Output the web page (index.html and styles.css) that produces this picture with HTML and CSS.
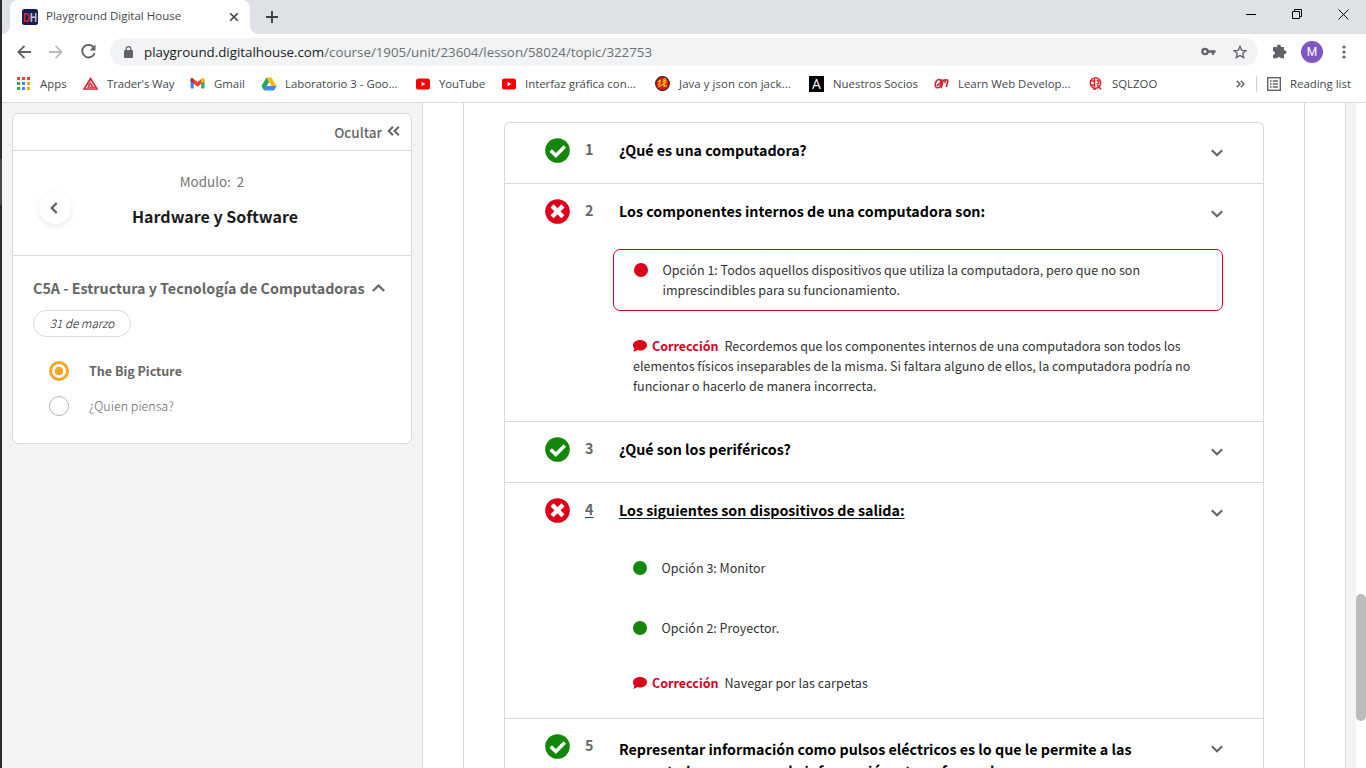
FILE: index.html
```html
<!DOCTYPE html>
<html lang="es">
<head>
<meta charset="utf-8">
<title>Playground Digital House</title>
<link rel="stylesheet" href="styles.css">
</head>
<body>
<svg class="defs" aria-hidden="true">
  <symbol id="ok" viewBox="0 0 25 25"><circle cx="12.5" cy="12.5" r="12.3" fill="#138808"/><path d="M5.700 12.400l5.200 5.200 8.900-9" fill="none" stroke="#fff" stroke-width="3.500"/></symbol>
  <symbol id="bad" viewBox="0 0 25 25"><circle cx="12.5" cy="12.5" r="12.3" fill="#dc001b"/><path d="M8.600 8.400l7.800 7.800M16.400 8.400l-7.800 7.800" fill="none" stroke="#fff" stroke-width="4.400" stroke-linecap="square"/></symbol>
  <symbol id="chev" viewBox="0 0 12 8"><path d="M.8 1.2L6 6.3l5.2-5.1" fill="none" stroke="#666" stroke-width="2.1"/></symbol>
  <symbol id="talk" viewBox="0 0 14 12"><path d="M7 0c3.9 0 7 2.3 7 5.2s-3.1 5.3-7 5.3c-1 0-2-.2-2.900-.5C3 11 1.600 11.600.2 11.600c.8-.8 1.200-1.900 1.200-2.900C.5 7.700 0 6.500 0 5.200 0 2.300 3.100 0 7 0z" fill="#dc001b"/></symbol>
  <symbol id="yt" viewBox="0 0 16 16"><rect x="1" y="2.500" width="14" height="11" rx="2.600" fill="#f00"/><path d="M6.600 5.800v4.400L10.300 8z" fill="#fff"/></symbol>
</svg>
<div class="window">
  <header class="tabs">
    <div class="tab">
      <svg width="16" height="16" viewBox="0 0 16 16"><rect width="16" height="16" rx="2.500" fill="#14204f"/><text x="1" y="13" class="logo red" textLength="7" lengthAdjust="spacingAndGlyphs">D</text><text x="8" y="13" class="logo pale" textLength="7" lengthAdjust="spacingAndGlyphs">H</text></svg>
      <span class="tab-title">Playground Digital House</span>
      <svg width="10" height="10" viewBox="0 0 10 10"><path d="M1.200 1.200l7.600 7.600M8.800 1.200L1.200 8.800" stroke="#3c4043" stroke-width="1.600"/></svg>
    </div>
    <svg class="plus" width="12" height="12" viewBox="0 0 12 12"><path d="M6 0v12M0 6h12" stroke="#3c4043" stroke-width="1.900"/></svg>
    <div class="wincontrols">
      <svg width="10" height="10"><path d="M0 5.500h10" stroke="#000"/></svg>
      <svg width="10" height="10" fill="none" stroke="#000"><path d="M.5 2.500h7v7h-7zM2.500 2.500v-2h7v7h-2"/></svg>
      <svg width="11" height="11"><path d="M.5.5l10 10M10.500.5l-10 10" stroke="#000"/></svg>
    </div>
  </header>
  <nav class="toolbar">
    <svg width="14" height="14" viewBox="0 0 14 14" fill="none" stroke="#5f6368" stroke-width="1.900"><path d="M14 7H1.500M7.500.8L1.300 7l6.200 6.200"/></svg>
    <svg class="fwd" width="14" height="14" viewBox="0 0 14 14" fill="none" stroke="#babcbe" stroke-width="1.900"><path d="M0 7h12.500M6.500.8L12.700 7l-6.200 6.200"/></svg>
    <svg class="reload" width="15" height="15" viewBox="0 0 15 15"><path d="M12.400 3.100A6.300 6.300 0 1 0 13.600 9" fill="none" stroke="#5f6368" stroke-width="1.900"/><path d="M14.500.5v6h-6z" fill="#5f6368"/></svg>
    <div class="omnibox">
      <svg width="9" height="12" viewBox="0 0 9 12"><rect y="4" width="9" height="8" rx="1" fill="#5f6368"/><path d="M2.200 4.500V3a2.300 2.300 0 0 1 4.600 0v1.500" fill="none" stroke="#5f6368" stroke-width="1.200"/></svg>
      <span class="url"><b>playground.digitalhouse.com</b>/course/1905/unit/23604/lesson/58024/topic/322753</span>
      <svg width="15" height="9" viewBox="0 0 15 9"><circle cx="4" cy="4.500" r="2.700" fill="none" stroke="#5f6368" stroke-width="2.300"/><path d="M7 4.500h7.500M12 4.500v3.200" stroke="#5f6368" stroke-width="2.400"/></svg>
      <svg class="star" width="14" height="14" viewBox="0 0 14 14"><path d="M7 1.300l1.700 4 4.200.3-3.200 2.800 1 4.200L7 10.400l-3.700 2.200 1-4.200L1.100 5.600l4.200-.3z" fill="none" stroke="#5f6368" stroke-width="1.300"/></svg>
    </div>
    <svg class="puzzle" width="15" height="15" viewBox="0 0 15 15"><path d="M2 3h3.200a1.900 1.900 0 1 1 3.600 0H12v3.400a1.900 1.900 0 1 1 0 3.600v4.200H8.800a1.900 1.900 0 0 0-3.600 0H1V11a1.900 1.900 0 0 0 0-3.800V4a1 1 0 0 1 1-1z" fill="#5f6368"/></svg>
    <span class="avatar">M</span>
    <svg class="dots" width="4" height="14" viewBox="0 0 4 14" fill="#5f6368"><circle cx="2" cy="2" r="1.600"/><circle cx="2" cy="7" r="1.600"/><circle cx="2" cy="12" r="1.600"/></svg>
  </nav>
  <nav class="bookmarks">
    <span class="bm"><svg width="15" height="15" viewBox="0 0 15 15"><path d="M1 1h3v3H1zM6 1h3v3H6zM11 1h3v3h-3z" fill="#ea4335"/><path d="M1 6h3v3H1zM1 11h3v3H1z" fill="#34a853"/><path d="M6 6h3v3H6zM6 11h3v3H6z" fill="#4285f4"/><path d="M11 6h3v3h-3zM11 11h3v3h-3z" fill="#fbab05"/></svg>Apps</span>
    <span class="bm"><svg width="15" height="15" viewBox="0 0 15 15" fill="none" stroke="#d6293a"><path d="M7.500 2.500L14 13H1z" stroke-width="1.700"/><path d="M7.500 7.300L10 11.200H5z" stroke-width="1.300"/><path d="M5 9l3-5M8 11.500h5" stroke-width=".7"/></svg>Trader's Way</span>
    <span class="bm"><svg width="15" height="15" viewBox="0 0 15 15"><path d="M.5 4v7.500a1 1 0 0 0 1 1h2.300V6z" fill="#4285f4"/><path d="M11.200 6v6.500h2.300a1 1 0 0 0 1-1V4z" fill="#34a853"/><path d="M11.200 3.200v4.500l3.300-2.600V3.700c0-1.500-1.600-2-2.500-1.200z" fill="#fbbc04"/><path d="M3.800 3.200v4.500L.5 5.100V3.700c0-1.500 1.600-2 2.500-1.200z" fill="#c5221f"/><path d="M3.700 3.100l3.800 3 3.800-3v4.600l-3.800 3-3.800-3z" fill="#ea4335"/></svg>Gmail</span>
    <span class="bm"><svg width="16" height="16" viewBox="0 0 16 16"><path d="M5.500 1.500h5l5 8.500h-5z" fill="#fbbc04"/><path d="M5.500 1.500L8 6l-5 8.500L.5 10z" fill="#1fa463"/><path d="M5.500 10h10L13 14.500H3z" fill="#4285f4"/></svg>Laboratorio 3 - Goo...</span>
    <span class="bm"><svg width="16" height="16"><use href="#yt"/></svg>YouTube</span>
    <span class="bm"><svg width="16" height="16"><use href="#yt"/></svg>Interfaz gráfica con...</span>
    <span class="bm"><svg width="15" height="15" viewBox="0 0 15 15"><circle cx="7.500" cy="7.500" r="6.900" fill="#e3170d" stroke="#40211c" stroke-width="1.100"/><path d="M3 6.200l3-2.300M5 4v3.500l-2 1.500M3.500 11l3-2M8 3.500l3-.8M7.500 5.500l4-1M9.200 4v6.500l3-1M7 9l4.500-3" fill="none" stroke="#ffd21c" stroke-width="1.200"/></svg>Java y json con jack...</span>
    <span class="bm"><svg width="15" height="16" viewBox="0 0 15 16"><rect width="15" height="16"/><text x="7.500" y="13" text-anchor="middle" class="a-mark">A</text></svg>Nuestros Socios</span>
    <span class="bm"><svg width="15" height="15" viewBox="0 0 15 15" fill="none" stroke="#c8242b" stroke-width="1.600"><ellipse cx="4.300" cy="7.700" rx="2.900" ry="4.200" transform="rotate(20 4.300 7.700)"/><path d="M2.800 9.800C5 8.500 7 6 7.800 3.200M7 12.300l2.300-8M9.300 4.500c1.800-1.500 2.600-.5 1.500 2.500M10.800 5c2.500-2.500 3.500-1 2.700 1.500l-1.200 4.500"/></svg>Learn Web Develop...</span>
    <span class="bm"><svg width="15" height="15" viewBox="0 0 15 15" fill="none" stroke="#e0202c" stroke-width="1.500"><circle cx="7.500" cy="7" r="5.200"/><path d="M2 5h4.500M2 9h4.500M6.500 3v8M8.500 4.500c3-.5 3 3.500 0 3.500M9.500 9l3.500 4.500M5 13h3"/></svg>SQLZOO</span>
    <svg class="more" width="9" height="8" viewBox="0 0 9 8" fill="none" stroke="#5f6368" stroke-width="1.500"><path d="M.8.8L4 4 .8 7.200M4.800.8L8 4 4.800 7.200"/></svg>
    <i class="sep"></i>
    <span class="reading"><svg width="14" height="14" viewBox="0 0 14 14" fill="none" stroke="#5f6368" stroke-width="1.400"><rect x=".7" y=".7" width="12.600" height="12.600"/><path d="M3 4h1.600M5.800 4h5.200M3 7h1.600M5.800 7h5.200M3 10h1.600M5.800 10h5.200"/></svg>Reading list</span>
  </nav>
  <div class="page">
    <aside class="sidebar">
      <div class="card">
        <div class="hide">Ocultar<svg width="13" height="10" viewBox="0 0 13 10" fill="none" stroke="#666" stroke-width="2.100"><path d="M6 .8L1.800 5 6 9.200M11.800.8L7.600 5l4.200 4.200"/></svg></div>
        <div class="module">
          <span class="back"><svg width="8" height="12" viewBox="0 0 8 12"><path d="M6.700 1L1.700 6l5 5" fill="none" stroke="#595959" stroke-width="2.100"/></svg></span>
          <div class="module-text">
            <p class="module-no">Modulo:&nbsp; 2</p>
            <h2 class="module-name">Hardware y Software</h2>
          </div>
        </div>
        <div class="unit">
          <h3 class="unit-name">C5A - Estructura y Tecnología de Computadoras<svg width="13" height="8" viewBox="0 0 13 8"><path d="M.8 7L6.500 1.500 12.200 7" fill="none" stroke="#666" stroke-width="2.200"/></svg></h3>
          <span class="date">31 de marzo</span>
          <ul class="topics">
            <li class="topic current"><i class="radio"></i>The Big Picture</li>
            <li class="topic"><i class="radio"></i>¿Quien piensa?</li>
          </ul>
        </div>
      </div>
    </aside>
    <main class="main">
      <div class="content">
        <div class="questions">
          <section class="q">
            <div class="q-head"><svg class="state"><use href="#ok"/></svg><span class="num">1</span><h4 class="title">¿Qué es una computadora?</h4><svg class="chev"><use href="#chev"/></svg></div>
          </section>
          <section class="q q2">
            <div class="q-head"><svg class="state"><use href="#bad"/></svg><span class="num">2</span><h4 class="title">Los componentes internos de una computadora son:</h4><svg class="chev"><use href="#chev"/></svg></div>
            <div class="wrong"><i class="dot"></i><p>Opción 1: Todos aquellos dispositivos que utiliza la computadora, pero que no son<br>imprescindibles para su funcionamiento.</p></div>
            <p class="fix"><svg class="talk"><use href="#talk"/></svg><b>Corrección</b>Recordemos que los componentes internos de una computadora son todos los<br>elementos físicos inseparables de la misma. Si faltara alguno de ellos, la computadora podría no<br>funcionar o hacerlo de manera incorrecta.</p>
          </section>
          <section class="q">
            <div class="q-head"><svg class="state"><use href="#ok"/></svg><span class="num">3</span><h4 class="title">¿Qué son los periféricos?</h4><svg class="chev"><use href="#chev"/></svg></div>
          </section>
          <section class="q q4">
            <div class="q-head hover"><svg class="state"><use href="#bad"/></svg><span class="num">4</span><h4 class="title">Los siguientes son dispositivos de salida:</h4><svg class="chev"><use href="#chev"/></svg></div>
            <div class="right"><i class="dot"></i>Opción 3: Monitor</div>
            <div class="right"><i class="dot"></i>Opción 2: Proyector.</div>
            <p class="fix"><svg class="talk"><use href="#talk"/></svg><b>Corrección</b>Navegar por las carpetas</p>
          </section>
          <section class="q long">
            <div class="q-head"><svg class="state"><use href="#ok"/></svg><span class="num">5</span><h4 class="title">Representar información como pulsos eléctricos es lo que le permite a las<br>computadoras procesar la información y transformarla.</h4><svg class="chev"><use href="#chev"/></svg></div>
          </section>
        </div>
      </div>
    </main>
    <div class="gutter"></div>
    <div class="scroll"><div class="thumb"></div></div>
  </div>
</div>
</body>
</html>
```
FILE: styles.css
```css
* { box-sizing: border-box; }
body, h2, h3, h4, p, ul { margin: 0; padding: 0; }
body { width: 1366px; height: 768px; overflow: hidden; font-family: "Noto Sans CJK SC", sans-serif; }
svg { flex: none; }
.defs { display: none; }

.window { display: flex; flex-direction: column; height: 768px; padding-left: 2px; background: linear-gradient(#2b2b2b 159px, #484848 159px, #484848 205px, #2b2b2b 205px); }
.tabs, .toolbar, .bookmarks { display: flex; align-items: center; font-family: "Open Sans", sans-serif; flex: none; }

/* Tab strip */
.tabs { height: 34px; background: #dee1e6; padding-left: 8px; }
.tab { display: flex; align-items: center; width: 240px; height: 34px; padding: 0 11px 0 12px; background: #fff; border-radius: 8px 8px 0 0; position: relative; }
.tab::before, .tab::after { content: ""; position: absolute; bottom: 0; width: 8px; height: 8px; }
.tab::before { left: -8px; background: radial-gradient(circle at 0 0, transparent 7.5px, #fff 8px); }
.tab::after { right: -8px; background: radial-gradient(circle at 100% 0, transparent 7.5px, #fff 8px); }
.logo { font: bold 12.5px "Liberation Sans", sans-serif; }
.red { fill: #e5252f; }
.pale { fill: #c3c9dc; }
.tab-title { flex: 1; margin-left: 8px; padding-bottom: 2px; font-size: 11.5px; color: #45484c; line-height: 32px; }
.plus { margin-left: 16px; }
.wincontrols { display: flex; align-items: center; gap: 36px; margin: -6px 17px 0 auto; }

/* Address bar */
.toolbar { height: 35px; background: #fff; padding: 0 0 0 15px; }
.fwd { margin-left: 18px; }
.reload { margin-left: 18px; }
.omnibox { display: flex; align-items: center; width: 1148px; height: 28px; margin-left: 14px; padding: 0 11px 0 14px; border-radius: 14px; background: #f1f3f4; }
.url { flex: 1; margin-left: 11px; font-size: 13.32px; color: #6b6f73; }
.url b { font-weight: 400; color: #202124; }
.star { margin-left: 17px; }
.puzzle { margin-left: 14px; }
.avatar { width: 22px; height: 22px; margin-left: 14px; border-radius: 50%; background: #7e57c2; color: #fff; font: 12px/22px Roboto, sans-serif; text-align: center; }
.dots { margin-left: 19px; }

/* Bookmarks bar */
.bookmarks { height: 34px; padding: 0 0 4px 14px; background: #fff; border-bottom: 1px solid #dadce0; color: #45484c; font-size: 11.4px; white-space: nowrap; }
.bm { display: flex; align-items: center; width: 154px; }
.bm svg { margin-right: 8px; }
.bm:nth-child(1) { width: 67px; gap: 1px; }
.bm:nth-child(2) { width: 107px; gap: 1px; letter-spacing: -.12px; }
.bm:nth-child(3) { width: 71px; gap: 1px; }
.bm:nth-child(5) { width: 86px; letter-spacing: -.12px; }
.bm:nth-child(7) { letter-spacing: .08px; }
.bm:nth-child(7), .bm:nth-child(8), .bm:nth-child(9), .bm:nth-child(10) { gap: 1px; }
.bm:nth-child(8) { width: 125px; }
.a-mark { font: 14px "Open Sans", sans-serif; fill: #fff; }
.more { margin-left: -6px; }
.sep { width: 1px; height: 16px; margin-left: 11px; background: #cfd1d4; }
.reading { display: flex; align-items: center; gap: 9px; margin-left: 10px; }

/* Page */
.page { display: flex; flex: 1; min-height: 0; background: #fff; }
.sidebar { width: 421px; padding: 10px; background: #f4f4f4; border-right: 1px solid #d9d9d9; }
.card { width: 400px; height: 331px; background: #fff; border: 1px solid #dadada; border-radius: 6px; color: #666; }
.hide { display: flex; align-items: center; justify-content: flex-end; gap: 5px; height: 37px; padding-right: 11px; border-bottom: 1px solid #dadada; font-size: 13.5px; font-weight: 500; line-height: 20px; }
.hide svg { margin-top: -2px; }
.module { display: grid; grid-template-columns: 58px 1fr 58px; height: 105px; padding-top: 20px; border-bottom: 1px solid #dadada; }
.back { display: flex; align-items: center; justify-content: center; justify-self: end; width: 32px; height: 32px; margin-top: 21px; padding-right: 3px; border-radius: 50%; box-shadow: 0 2px 6px rgba(0,0,0,.09); }
.module-text { text-align: center; }
.module-no { font-size: 13.4px; line-height: 21px; color: #757575; }
.module-name { margin: 12px 0 0 6px; font-size: 16px; line-height: 24px; color: #1c1c1c; }
.unit { padding: 22px 0 0 20px; }
.unit-name { display: flex; align-items: center; gap: 7px; font-size: 14.3px; line-height: 20px; white-space: nowrap; }
.date { display: block; width: 98px; height: 27px; margin-top: 12px; border: 1px solid #dadada; border-radius: 14px; color: #111; font-size: 11.7px; font-style: italic; font-weight: 300; line-height: 24px; text-align: center; }
.topics { display: grid; gap: 15px; margin: 24px 0 0 16px; list-style: none; }
.topic { display: flex; align-items: center; gap: 20px; height: 20px; font-size: 12.5px; font-weight: 300; line-height: 20px; }
.radio { width: 20px; height: 20px; border: 1px solid #b5b5b5; border-radius: 50%; }
.current { font-weight: 700; }
.current .radio { border: 3px solid #f5a623; background: radial-gradient(circle, #f5a623 4px, #fff 4.5px); }

.main { width: 923px; padding: 0 40px; border-right: 1px solid #d9d9d9; }
.content { height: 100%; padding: 19px 40px 0; border: solid #d9d9d9; border-width: 0 1px; overflow: hidden; }
.questions { width: 760px; border: 1px solid #d9d9d9; border-radius: 6px 6px 0 0; border-bottom: 0; }
.q { height: 61px; border-bottom: 1px solid #d9d9d9; color: #333; font-size: 12.53px; line-height: 20px; }
.q2 { height: 238px; }
.q4 { height: 236px; }
.long { height: 90px; }
.q-head { display: grid; grid-template-columns: 40px 34px 1fr 12px; align-items: start; height: 60px; padding: 15px 40px 0; }
.state { width: 25px; height: 25px; }
.num { margin-top: 1px; font-size: 14.3px; font-weight: 700; color: #666; }
.title { margin-top: 2px; font-size: 14.27px; font-weight: 700; color: #000; }
.long .title { margin-top: 4px; line-height: 22px; white-space: nowrap; }
.chev { width: 12px; height: 8px; margin-top: 11px; }
.hover .num, .hover .title { justify-self: start; text-decoration: underline #17456e 1px; text-underline-offset: 2px; }
.hover .title { text-decoration-color: #0c2236; }
.dot { width: 14px; height: 14px; border-radius: 50%; background: #138808; }
.wrong { display: flex; gap: 14.500px; width: 610px; height: 62px; margin: 5px 0 0 108px; padding: 10px 20px; border: 1px solid #dc001b; border-radius: 7px; white-space: nowrap; }
.wrong .dot { margin-top: 3px; background: #dc001b; }
.right { display: flex; align-items: center; gap: 14.500px; height: 20px; margin: 15px 0 0 128px; }
.right + .right { margin-top: 40px; }
.fix { margin: 25px 0 0 128px; white-space: nowrap; }
.q4 .fix { margin-top: 35px; }
.fix b { margin: 0 6px 0 5px; color: #dc001b; }
.talk { width: 14px; height: 12px; vertical-align: -1px; }

.gutter { width: 10px; background: #f4f4f4; }
.scroll { width: 10px; padding-top: 491px; background: #fff; border-radius: 5px; }
.thumb { height: 127px; border-radius: 5px; background: #bcbcbc; }
```
